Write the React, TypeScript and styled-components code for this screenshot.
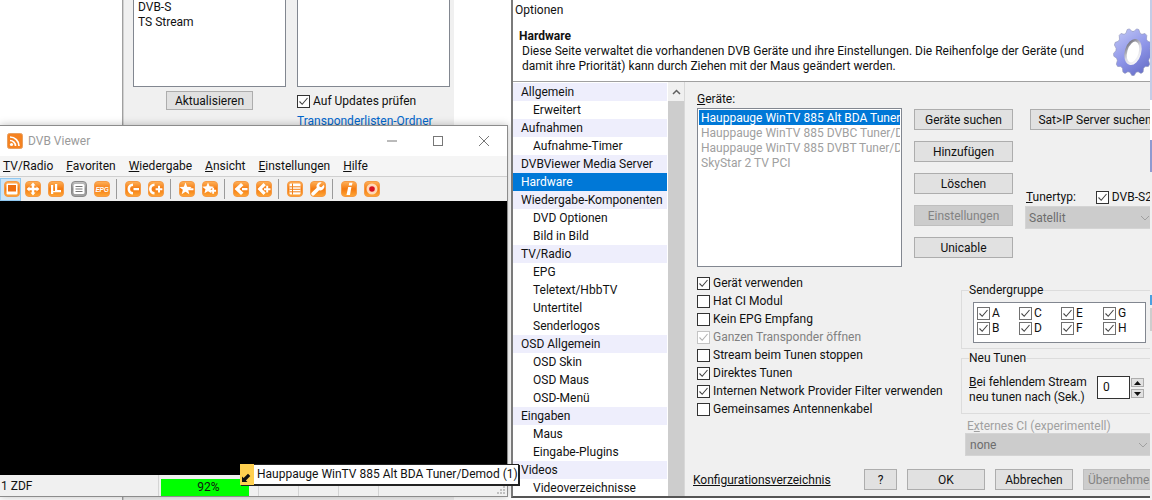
import * as React from 'react';
import styled, { createGlobalStyle } from 'styled-components';

const GlobalStyle = createGlobalStyle`
  html, body { margin: 0; padding: 0; background: #fff; }
  * { box-sizing: border-box; }
  body { font: 12px/15px Roboto, "Noto Sans", sans-serif; color: #111; overflow: hidden; }
`;

const Desktop = styled.div`
  position: relative;
  width: 1152px;
  height: 500px;
  overflow: hidden;
  background: #fff;
`;

/* ---- window behind everything ---- */
const BackWindow = styled.div`
  position: absolute;
  inset: 0 auto 0 0;
  width: 511px;
  display: flex;
`;
const BackBlank = styled.div`
  width: 123px;
  border-right: 1px solid #a0a0a0;
  overflow: hidden;
`;
const ClippedNumber = styled.div`
  margin: -13px 0 0 99px;
  color: #0000e0;
  font-weight: 700;
`;
const BackPanel = styled.div`
  width: 331px;
  background: #f0f0f0;
  border-left: 1px solid #d0d0d0;
  padding-left: 9px;
  display: flex;
  gap: 11px;
`;
const BackColumn = styled.div`
  width: 153px;
  display: flex;
  flex-direction: column;
`;
const BackList = styled.div`
  height: 87px;
  background: #fff;
  border: 1px solid #828790;
  border-top: 0;
  padding: 0 4px;
`;
const BackListItem = styled.div`
  line-height: 15px;
`;
const BackButton = styled.div`
  align-self: center;
  margin-top: 4px;
  width: 87px;
  height: 19px;
  line-height: 19px;
  text-align: center;
  background: #e1e1e1;
  border: 1px solid #adadad;
`;
const BackCheck = styled.div`
  margin-top: 7px;
  display: flex;
  align-items: center;
  gap: 3px;
`;
const BackLink = styled.div`
  margin-top: 5px;
  color: #0066cc;
  white-space: nowrap;
`;
const EdgeStrip = styled.div`
  position: absolute;
  left: 1150px;
  top: 0;
  width: 2px;
  height: 500px;
  background: linear-gradient(
    to bottom,
    #c4cce6 0 100px,
    #fff 100px 140px,
    #8f9ad0 140px 172px,
    #f0f0f0 172px 295px,
    #4aa0e0 295px 305px,
    #f0f0f0 305px 308px,
    #cdcdcd 308px 331px,
    #f0f0f0 331px
  );
`;

/* ---- shared widgets ---- */
const Box = styled.span<{ $dim?: boolean; $soft?: boolean }>`
  flex: none;
  width: 13px;
  height: 13px;
  display: block;
  background: #fff;
  border: 1px solid ${p => (p.$dim ? '#c4c4c4' : p.$soft ? '#707070' : '#333')};
  svg { display: block; }
`;
const CheckMark = ({ color }: { color: string }) => (
  <svg width="11" height="11" viewBox="0 0 11 11">
    <path d="M1.5 5.5 L4.2 8.3 L9.5 2" fill="none" stroke={color} strokeWidth="1.1" />
  </svg>
);
const Check = ({ on, dim, soft }: { on?: boolean; dim?: boolean; soft?: boolean }) => (
  <Box $dim={dim} $soft={soft}>{on && <CheckMark color={dim ? '#b0b0b0' : '#444'} />}</Box>
);
const Button = styled.div<{ $w?: number; $off?: boolean }>`
  flex: none;
  width: ${p => p.$w ?? 99}px;
  height: 21px;
  line-height: 21px;
  text-align: center;
  white-space: nowrap;
  background: ${p => (p.$off ? '#cccccc' : '#e1e1e1')};
  border: 1px solid ${p => (p.$off ? '#bfbfbf' : '#adadad')};
  color: ${p => (p.$off ? '#838383' : '#111')};
`;
const Combo = styled.div`
  height: 23px;
  line-height: 23px;
  background: #cccccc;
  border: 1px solid #d4d4d4;
  color: #6d6d6d;
  padding-left: 3px;
  position: relative;
  white-space: nowrap;
`;
const ComboArrow = styled.svg<{ $left: number }>`
  position: absolute;
  top: 8px;
  left: ${p => p.$left}px;
`;
const Underlined = styled.span`
  text-decoration: underline;
`;

/* ---- DVB Viewer window ---- */
const ViewerWindow = styled.div`
  position: absolute;
  left: 0;
  top: 125px;
  width: 508px;
  height: 372px;
  background: #fff;
  border-top: 1px solid #8c8c8c;
  border-right: 1px solid #8c8c8c;
  border-bottom: 1px solid #8c8c8c;
  box-shadow: 0 0 8px rgba(0, 0, 0, 0.25);
  display: flex;
  flex-direction: column;
`;
const TitleBar = styled.div`
  height: 30px;
  display: flex;
  align-items: center;
  padding-left: 7px;
  gap: 5px;
  color: #9a9a9a;
  flex: none;
`;
const WindowControls = styled.div`
  margin-left: auto;
  display: flex;
  align-items: center;
  svg { display: block; width: 46px; }
`;
const MenuBar = styled.div`
  height: 21px;
  flex: none;
  display: flex;
  gap: 13px;
  padding-left: 3px;
  align-items: center;
  background: #f5f5f5;
  border-bottom: 1px solid #d0d0d0;
  color: #111;
`;
const Toolbar = styled.div`
  height: 24px;
  flex: none;
  display: flex;
  align-items: center;
  background: #f0f0f0;
  position: relative;
`;
const ToolSlot = styled.div<{ $active?: boolean }>`
  width: ${p => (p.$active ? 21 : 23)}px;
  height: 23px;
  display: flex;
  align-items: center;
  justify-content: center;
  padding-left: ${p => (p.$active ? 2 : 0)}px;
  background: ${p => (p.$active ? '#cce4f7' : 'transparent')};
  border: 1px solid ${p => (p.$active ? '#90c8f0' : 'transparent')};
`;
const ToolSep = styled.div`
  flex: none;
  width: 1px;
  height: 20px;
  background: #9a9a9a;
  margin: 0 4px 0 3px;
`;
const Video = styled.div`
  flex: 1;
  background: #000;
`;
const StatusBar = styled.div`
  height: 21px;
  flex: none;
  display: flex;
  background: #f0f0f0;
  position: relative;
`;
const StatusName = styled.div`
  width: 159px;
  padding-left: 1px;
  line-height: 23px;
  border-right: 1px solid #d4d4d4;
`;
const Signal = styled.div`
  width: 88px;
  margin: 4px 0 0 2px;
  padding-left: 7px;
  background: #00ff00;
  text-align: center;
  line-height: 16px;
`;
const StatusCell = styled.div<{ $w: number }>`
  width: ${p => p.$w}px;
  border-right: 1px solid #d4d4d4;
`;
const Grip = styled.svg`
  position: absolute;
  right: 1px;
  bottom: 1px;
`;
const Tooltip = styled.div`
  position: absolute;
  left: 240px;
  top: 464px;
  height: 21px;
  width: 279px;
  display: flex;
  align-items: center;
  background: #fff;
  box-shadow: 1px 1px 0 #222, 0 0 0 1px #222 inset;
  white-space: nowrap;
`;
const TooltipIcon = styled.div`
  width: 14px;
  height: 21px;
  background: #ffd050;
  margin-right: 3px;
  display: flex;
  align-items: flex-end;
  padding: 0 0 2px 1px;
`;

/* ---- Options window ---- */
const OptionsWindow = styled.div`
  position: absolute;
  left: 511px;
  top: 0;
  width: 639px;
  height: 498px;
  background: #f0f0f0;
  border-left: 2px solid #7a7a7a;
  border-bottom: 2px solid #555;
  display: flex;
  flex-direction: column;
  overflow: hidden;
`;
const OptionsTitle = styled.div`
  height: 19px;
  padding: 3px 0 0 2px;
  background: #fff;
  flex: none;
`;
const OptionsHeader = styled.div`
  height: 63px;
  flex: none;
  background: #fff;
  border-bottom: 1px solid #a0a0a0;
  padding: 10px 0 0 6px;
  position: relative;
`;
const HeaderTitle = styled.div`
  font-weight: 700;
`;
const HeaderText = styled.div`
  margin-left: 3px;
  white-space: nowrap;
`;
const GearIcon = styled.svg`
  position: absolute;
  left: 600px;
  top: 9px;
`;
const OptionsBody = styled.div`
  flex: 1;
  min-height: 0;
  display: flex;
`;
const Tree = styled.div`
  width: 155px;
  flex: none;
  background: #fff;
  padding: 1px 1px 0 0;
`;
const TreeRow = styled.div<{ $child?: boolean; $selected?: boolean }>`
  height: 18px;
  line-height: 19px;
  padding-left: ${p => (p.$child ? 20 : 8)}px;
  white-space: nowrap;
  background: ${p => (p.$selected ? '#0078d7' : p.$child ? '#fff' : '#eeeefc')};
  color: ${p => (p.$selected ? '#fff' : '#111')};
`;
const ScrollBar = styled.div`
  width: 16px;
  flex: none;
  background: #f0f0f0;
  padding-top: 1px;
`;
const ScrollUp = styled.div`
  height: 18px;
  display: flex;
  align-items: center;
  justify-content: center;
`;
const ScrollThumb = styled.div`
  height: 400px;
  background: #cdcdcd;
`;
const Panel = styled.div`
  flex: 1;
  min-width: 0;
  padding: 10px 0 0 12px;
  border-left: 1px solid #d8d8d8;
  overflow: hidden;
`;
const TopRow = styled.div`
  display: flex;
  height: 182px;
`;
const DeviceColumn = styled.div`
  width: 205px;
  flex: none;
`;
const DeviceList = styled.div`
  height: 159px;
  margin-top: 1px;
  background: #fff;
  border: 1px solid #828790;
  padding: 1px;
  overflow: hidden;
`;
const DeviceItem = styled.div<{ $selected?: boolean }>`
  height: 15px;
  line-height: 17px;
  padding-left: 2px;
  white-space: nowrap;
  overflow: hidden;
  background: ${p => (p.$selected ? '#0078d7' : 'transparent')};
  color: ${p => (p.$selected ? '#fff' : '#a0a0a0')};
`;
const ButtonColumn = styled.div`
  margin: 17px 0 0 12px;
  display: flex;
  flex-direction: column;
  gap: 11px;
`;
const TunerColumn = styled.div`
  margin: 17px 0 0 12px;
  width: 200px;
  flex: none;
`;
const SatButton = styled(Button)`
  margin-left: 5px;
  width: 130px;
`;
const TunerRow = styled.div`
  margin-top: 59px;
  height: 16px;
  display: flex;
  align-items: center;
  padding-left: 1px;
`;
const TunerBox = styled.div`
  margin-left: 20px;
  display: flex;
  align-items: center;
  gap: 3px;
  white-space: nowrap;
`;
const TunerCombo = styled(Combo)`
  margin-top: 1px;
  width: 180px;
`;
const LowerRow = styled.div`
  display: flex;
  height: 195px;
`;
const OptionList = styled.div`
  width: 264px;
  flex: none;
`;
const OptionRow = styled.div<{ $off?: boolean }>`
  height: 18px;
  display: flex;
  align-items: center;
  gap: 3px;
  white-space: nowrap;
  color: ${p => (p.$off ? '#808080' : '#111')};
`;
const SideColumn = styled.div`
  width: 230px;
  flex: none;
  padding-top: 8px;
`;
const Group = styled.fieldset<{ $h: number; $gap?: number }>`
  margin: ${p => p.$gap ?? 0}px 0 0;
  padding: 0 0 0 11px;
  height: ${p => p.$h}px;
  border: 1px solid #dcdcdc;
  min-width: 0;
  legend { padding: 0; margin-left: -4px; line-height: 16px; }
`;
const ChannelGrid = styled.div`
  width: 173px;
  height: 41px;
  margin-top: 4px;
  padding: 3px 0 0 3px;
  background: #fff;
  border: 1px solid #828790;
  display: grid;
  grid-template-columns: repeat(4, 42px);
  grid-auto-rows: 15px;
`;
const ChannelItem = styled.div`
  display: flex;
  align-items: center;
  gap: 2px;
`;
const TuneRow = styled.div`
  display: flex;
  margin: 9px 0 0 -4px;
`;
const TuneText = styled.div`
  width: 128px;
  white-space: nowrap;
`;
const SpinInput = styled.div`
  width: 33px;
  height: 23px;
  margin-top: 1px;
  padding-left: 5px;
  line-height: 21px;
  background: #fff;
  border: 1px solid #333;
`;
const SpinButtons = styled.div`
  margin: 3px 0 0 1px;
  display: flex;
  flex-direction: column;
  gap: 2px;
`;
const SpinButton = styled.div`
  width: 13px;
  height: 9px;
  background: #e1e1e1;
  border: 1px solid #adadad;
  display: flex;
  align-items: center;
  justify-content: center;
`;
const ExternalLabel = styled.div`
  margin: 5px 0 0 6px;
  height: 14px;
  color: #a0a0a0;
  white-space: nowrap;
`;
const ExternalCombo = styled(Combo)`
  margin-left: 4px;
  width: 200px;
  padding-left: 4px;
`;
const Footer = styled.div`
  display: flex;
  align-items: center;
  margin-left: -4px;
  height: 21px;
`;
const ConfigLink = styled.div`
  flex: none;
  width: 171px;
  padding-top: 1px;
  color: #111;
  text-decoration: underline;
`;
const FooterButtons = styled.div`
  flex: none;
  display: flex;
  gap: 10px;
`;

/* ---- data ---- */
const tree: [string, boolean?, boolean?][] = [
  ['Allgemein'], ['Erweitert', true], ['Aufnahmen'], ['Aufnahme-Timer', true],
  ['DVBViewer Media Server'], ['Hardware', false, true], ['Wiedergabe-Komponenten'],
  ['DVD Optionen', true], ['Bild in Bild', true], ['TV/Radio'], ['EPG', true],
  ['Teletext/HbbTV', true], ['Untertitel', true], ['Senderlogos', true], ['OSD Allgemein'],
  ['OSD Skin', true], ['OSD Maus', true], ['OSD-Menü', true], ['Eingaben'], ['Maus', true],
  ['Eingabe-Plugins', true], ['Videos'], ['Videoverzeichnisse', true],
];

const options: [string, boolean, boolean?][] = [
  ['Gerät verwenden', true], ['Hat CI Modul', false], ['Kein EPG Empfang', false],
  ['Ganzen Transponder öffnen', true, true], ['Stream beim Tunen stoppen', false],
  ['Direktes Tunen', true], ['Internen Network Provider Filter verwenden', true],
  ['Gemeinsames Antennenkabel', false],
];

/* five pointed star for the favourites icons */
const starPath = (cx: number, cy: number, R: number, r: number) => {
  let d = '';
  for (let i = 0; i < 10; i++) {
    const rad = i % 2 ? r : R;
    const a = (Math.PI / 5) * i - Math.PI / 2;
    d += `${i ? 'L' : 'M'}${(cx + rad * Math.cos(a)).toFixed(2)} ${(cy + rad * Math.sin(a)).toFixed(2)}`;
  }
  return `${d}z`;
};

/* toothed outline for the options gear */
const gearPath = (cx: number, cy: number, rx: number, ry: number, teeth: number) => {
  let d = '';
  for (let i = 0; i < teeth * 4; i++) {
    const k = [0.88, 1, 1, 0.88][i % 4];
    const a = (Math.PI * 2 * (i - 0.5)) / (teeth * 4);
    d += `${i ? 'L' : 'M'}${(cx + rx * k * Math.cos(a)).toFixed(2)} ${(cy + ry * k * Math.sin(a)).toFixed(2)}`;
  }
  return `${d}z`;
};

/* ---- toolbar icons: orange rounded tile with a white glyph ---- */
const glyphs: Record<string, React.ReactNode> = {
  screen: <g><rect x="2.500" y="2.500" width="11" height="11" rx="1" fill="#fff" /><rect x="4" y="4" width="8" height="6.500" fill="#ee6f10" /></g>,
  move: <path d="M8 1.500l2.600 3H9.200v2.300h2.300V5.400l3 2.600-3 2.600V9.200H9.200v2.300h1.400l-2.600 3-2.600-3h1.400V9.200H4.500v1.400l-3-2.600 3-2.600v1.400h2.300V4.500H5.400z" fill="#fff" />,
  mu: <path d="M3 13V4h2.200v6H7V3h2.200v6H13v2.200H5.200V13z" fill="#fff" />,
  list: <g><rect x="2.500" y="3" width="11" height="10" rx="1.500" fill="#fff" /><path d="M4.500 5.500h7M4.500 8h7M4.500 10.500h7" stroke="#777" /></g>,
  epg: <text x="8" y="10.800" fontSize="6.600" fontWeight="700" fontStyle="italic" textAnchor="middle" fill="#fff" fontFamily="Liberation Sans, sans-serif" letterSpacing="-0.3">EPG</text>,
  cminus: <path d="M8 2.500a5.500 5.500 0 1 0 0 11v-2.600a2.900 2.900 0 1 1 0-5.800z M8.500 7H14v2.200H8.500z" fill="#fff" />,
  cplus: <path d="M6.500 2.500a5.500 5.500 0 1 0 0 11v-2.600a2.900 2.900 0 1 1 0-5.800z M10 4.800h2v2.400h2.400v2H12v2.400h-2V9.200H7.600v-2H10z" fill="#fff" />,
  starminus: <path d={`${starPath(6.500, 8, 6.500, 2.800)} M9 7.200h5.500v2H9z`} fill="#fff" />,
  starplus: <path d={`${starPath(6, 7.500, 6, 2.700)} M10.200 6.800h1.900v2h2v1.900h-2v2h-1.900v-2h-2V8.800h2z`} fill="#fff" />,
  backminus: <path d="M1.500 8l6.500-6 2.400 2.200L6.500 8l3.900 3.800L8 14z M9 7h5.500v2.200H9z" fill="#fff" />,
  backplus: <path d="M1.500 8l6-6 2.300 2.200L6 8l3.800 3.800L7.500 14z M10.200 4.800h2v2.400h2.300v2h-2.300v2.400h-2V9.200H8v-2h2.200z" fill="#fff" />,
  table: <g><rect x="2.500" y="2.500" width="11" height="11" rx="1" fill="#fff" /><path d="M2.500 5.800h11M2.500 8.300h11M2.500 10.800h11M5.500 2.500v11" stroke="#f0801a" /></g>,
  wrench: <path d="M14 3.700l-2.700 2.500-1.700-.5-.5-1.700L11.700 1.500A4 4 0 0 0 6.700 6.700L1.800 11.500a1.700 1.700 0 0 0 2.500 2.600l4.900-4.900A4 4 0 0 0 14 3.700z" fill="#fff" />,
  info: <path d="M8.300 1.800h3.200l-.6 2.800H7.700z M7.200 6h3.200L9 14H5.500z" fill="#fff" />,
  record: <g><circle cx="8" cy="8" r="5.500" fill="#ffd9b8" /><circle cx="8" cy="8" r="2.800" fill="#d80f20" /></g>,
};

const Tool = ({ name, gray }: { name: string; gray?: boolean }) => (
  <svg width="16" height="16" viewBox="0 0 16 16">
    <defs>
      <linearGradient id={`t-${name}`} x1="0" y1="0" x2="0" y2="1">
        <stop offset="0" stopColor={gray ? '#c8c8c8' : '#ffb25a'} />
        <stop offset="0.5" stopColor={gray ? '#8a8a8a' : '#f47a10'} />
        <stop offset="1" stopColor={gray ? '#a8a8a8' : '#ffa838'} />
      </linearGradient>
    </defs>
    <rect x="0.500" y="0.500" width="15" height="15" rx="3.500" fill={`url(#t-${name})`} stroke={gray ? '#8a8a8a' : '#f59a45'} />
    {glyphs[name]}
  </svg>
);

const toolGroups = [
  ['screen', 'move', 'mu', 'list', 'epg'],
  ['cminus', 'cplus'],
  ['starminus', 'starplus'],
  ['backminus', 'backplus'],
  ['table', 'wrench'],
  ['info', 'record'],
];

const App = () => (
  <>
    <GlobalStyle />
    <Desktop>
      <BackWindow>
        <BackBlank><ClippedNumber>243</ClippedNumber></BackBlank>
        <BackPanel>
          <BackColumn>
            <BackList>
              <BackListItem>DVB-S</BackListItem>
              <BackListItem>TS Stream</BackListItem>
            </BackList>
            <BackButton>Aktualisieren</BackButton>
          </BackColumn>
          <BackColumn>
            <BackList />
            <BackCheck><Check on />Auf Updates prüfen</BackCheck>
            <BackLink>Transponderlisten-Ordner</BackLink>
          </BackColumn>
        </BackPanel>
      </BackWindow>
      <EdgeStrip />

      <ViewerWindow>
        <TitleBar>
          <svg width="16" height="16" viewBox="0 0 16 16">
            <rect x="0.500" y="0.500" width="15" height="15" rx="2" fill="#f58220" stroke="#e8a060" />
            <circle cx="4.500" cy="11.500" r="1.600" fill="#fff" />
            <path d="M3 7.500a5.500 5.500 0 0 1 5.500 5.500 M3 4a9 9 0 0 1 9 9" fill="none" stroke="#fff" strokeWidth="1.700" />
          </svg>
          DVB Viewer
          <WindowControls>
            <svg height="30" viewBox="0 0 46 30"><path d="M18 15h10" stroke="#777" /></svg>
            <svg height="30" viewBox="0 0 46 30"><rect x="18.500" y="10.500" width="9" height="9" fill="none" stroke="#777" /></svg>
            <svg height="30" viewBox="0 0 46 30"><path d="M18 10l10 10M28 10l-10 10" stroke="#777" /></svg>
          </WindowControls>
        </TitleBar>
        <MenuBar>
          <span><Underlined>T</Underlined>V/Radio</span>
          <span><Underlined>F</Underlined>avoriten</span>
          <span><Underlined>W</Underlined>iedergabe</span>
          <span><Underlined>A</Underlined>nsicht</span>
          <span><Underlined>E</Underlined>instellungen</span>
          <span><Underlined>H</Underlined>ilfe</span>
        </MenuBar>
        <Toolbar>
          {toolGroups.map((group, g) => (
            <React.Fragment key={g}>
              {g > 0 && <ToolSep />}
              {group.map(name => (
                <ToolSlot key={name} $active={name === 'screen'}>
                  <Tool name={name} gray={name === 'list'} />
                </ToolSlot>
              ))}
            </React.Fragment>
          ))}
        </Toolbar>
        <Video />
        <StatusBar>
          <StatusName>1 ZDF</StatusName>
          <Signal>92%</Signal>
          <StatusCell $w={10} />
          <StatusCell $w={40} />
          <StatusCell $w={40} />
          <StatusCell $w={40} />
          <Grip width="9" height="9" viewBox="0 0 9 9">
            <path d="M6 0h2v2H6z M3 3h2v2H3z M6 3h2v2H6z M0 6h2v2H0z M3 6h2v2H3z M6 6h2v2H6z" fill="#c0c0c0" />
          </Grip>
        </StatusBar>
      </ViewerWindow>

      <OptionsWindow>
        <OptionsTitle>Optionen</OptionsTitle>
        <OptionsHeader>
          <HeaderTitle>Hardware</HeaderTitle>
          <HeaderText>
            Diese Seite verwaltet die vorhandenen DVB Geräte und ihre Einstellungen. Die Reihenfolge der Geräte (und<br />
            damit ihre Priorität) kann durch Ziehen mit der Maus geändert werden.
          </HeaderText>
          <GearIcon width="40" height="48" viewBox="0 0 40 48">
            <defs>
              <linearGradient id="gear" x1="0" y1="0" x2="0.600" y2="1">
                <stop offset="0" stopColor="#c4caf6" />
                <stop offset="0.600" stopColor="#8e95e8" />
                <stop offset="1" stopColor="#6c74cc" />
              </linearGradient>
              <linearGradient id="gearHole" x1="0" y1="0" x2="1" y2="1">
                <stop offset="0" stopColor="#60606c" />
                <stop offset="0.500" stopColor="#d8d8e0" />
                <stop offset="1" stopColor="#fff" />
              </linearGradient>
            </defs>
            <path d={gearPath(20, 24, 19.500, 23.500, 13)} fill="url(#gear)" stroke="#8f94b8" strokeWidth="0.600" />
            <ellipse cx="20" cy="24" rx="7" ry="12" transform="rotate(16 20 24)" fill="#fff" stroke="url(#gearHole)" strokeWidth="2.500" />
          </GearIcon>
        </OptionsHeader>
        <OptionsBody>
          <Tree>
            {tree.map(([label, child, selected]) => (
              <TreeRow key={label} $child={child} $selected={selected}>{label}</TreeRow>
            ))}
          </Tree>
          <ScrollBar>
            <ScrollUp>
              <svg width="9" height="6" viewBox="0 0 9 6"><path d="M1 5l3.500-3.500L8 5" fill="none" stroke="#606060" strokeWidth="1.500" /></svg>
            </ScrollUp>
            <ScrollThumb />
          </ScrollBar>
          <Panel>
            <TopRow>
              <DeviceColumn>
                <div><Underlined>G</Underlined>eräte:</div>
                <DeviceList>
                  <DeviceItem $selected>Hauppauge WinTV 885 Alt BDA Tuner/Demod (1)</DeviceItem>
                  <DeviceItem>Hauppauge WinTV 885 DVBC Tuner/Demod</DeviceItem>
                  <DeviceItem>Hauppauge WinTV 885 DVBT Tuner/Demod</DeviceItem>
                  <DeviceItem>SkyStar 2 TV PCI</DeviceItem>
                </DeviceList>
              </DeviceColumn>
              <ButtonColumn>
                <Button>Geräte suchen</Button>
                <Button>Hinzufügen</Button>
                <Button>Löschen</Button>
                <Button $off>Einstellungen</Button>
                <Button>Unicable</Button>
              </ButtonColumn>
              <TunerColumn>
                <SatButton>Sat&gt;IP Server suchen</SatButton>
                <TunerRow>
                  <span><Underlined>T</Underlined>unertyp:</span>
                  <TunerBox><Check on />DVB-S2</TunerBox>
                </TunerRow>
                <TunerCombo>
                  Satellit
                  <ComboArrow $left={114} width="10" height="6" viewBox="0 0 10 6"><path d="M1 1l4 4 4-4" fill="none" stroke="#a0a0a0" /></ComboArrow>
                </TunerCombo>
              </TunerColumn>
            </TopRow>
            <LowerRow>
              <OptionList>
                {options.map(([label, on, off]) => (
                  <OptionRow key={label} $off={off}><Check on={on} dim={off} />{label}</OptionRow>
                ))}
              </OptionList>
              <SideColumn>
                <Group $h={67}>
                  <legend>Sendergruppe</legend>
                  <ChannelGrid>
                    {['A', 'C', 'E', 'G', 'B', 'D', 'F', 'H'].map(letter => (
                      <ChannelItem key={letter}><Check on soft />{letter}</ChannelItem>
                    ))}
                  </ChannelGrid>
                </Group>
                <Group $h={64} $gap={1}>
                  <legend>Neu Tunen</legend>
                  <TuneRow>
                    <TuneText><Underlined>B</Underlined>ei fehlendem Stream<br />neu tunen nach (Sek.)</TuneText>
                    <SpinInput>0</SpinInput>
                    <SpinButtons>
                      <SpinButton><svg width="7" height="4" viewBox="0 0 7 4"><path d="M3.500 0L7 4H0z" fill="#111" /></svg></SpinButton>
                      <SpinButton><svg width="7" height="4" viewBox="0 0 7 4"><path d="M3.500 4L0 0h7z" fill="#111" /></svg></SpinButton>
                    </SpinButtons>
                  </TuneRow>
                </Group>
                <ExternalLabel>E<Underlined>x</Underlined>ternes CI (experimentell)</ExternalLabel>
                <ExternalCombo>
                  none
                  <ComboArrow $left={172} width="10" height="6" viewBox="0 0 10 6"><path d="M1 1l4 4 4-4" fill="none" stroke="#a0a0a0" /></ComboArrow>
                </ExternalCombo>
              </SideColumn>
            </LowerRow>
            <Footer>
              <ConfigLink>Konfigurationsverzeichnis</ConfigLink>
              <FooterButtons>
                <Button $w={33}>?</Button>
                <Button $w={78}>OK</Button>
                <Button $w={78}>Abbrechen</Button>
                <Button $w={78} $off>Übernehmen</Button>
              </FooterButtons>
            </Footer>
          </Panel>
        </OptionsBody>
      </OptionsWindow>

      <Tooltip>
        <TooltipIcon>
          <svg width="11" height="11" viewBox="0 0 11 11"><path d="M1 10V4.500l1.600 1.600L7 1.700 9.300 4 4.900 8.400 6.500 10z" fill="#111" /></svg>
        </TooltipIcon>
        Hauppauge WinTV 885 Alt BDA Tuner/Demod (1)
      </Tooltip>
    </Desktop>
  </>
);

export default App;
